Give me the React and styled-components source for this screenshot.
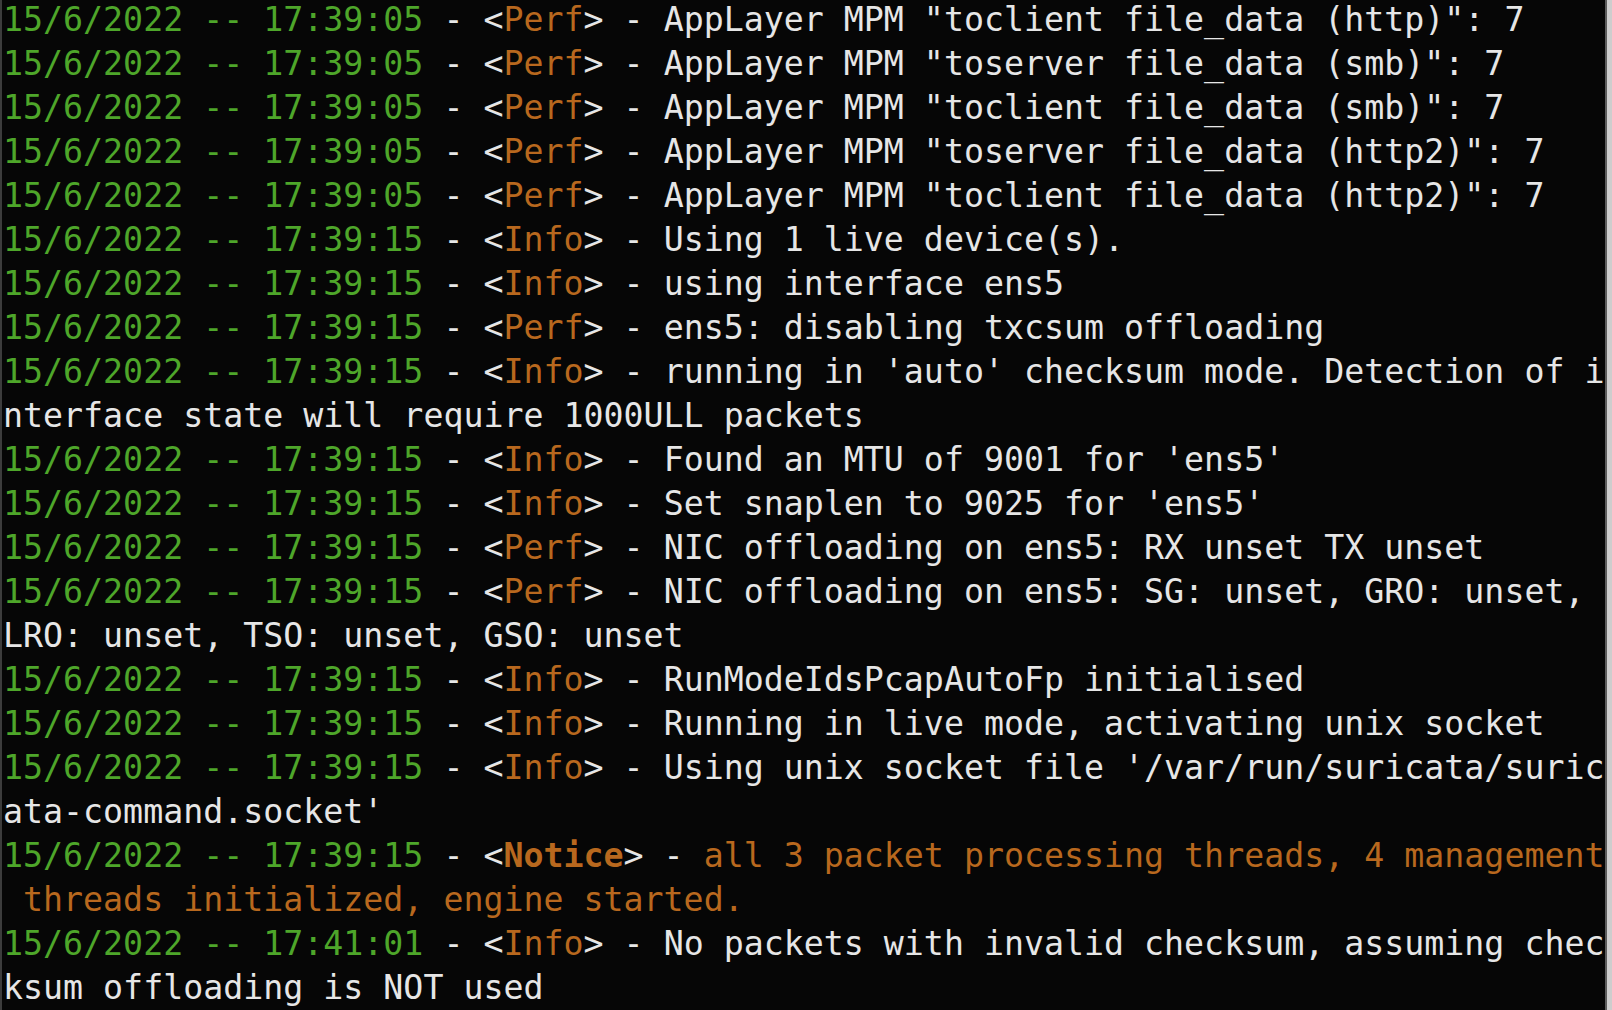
import React from 'react';
import styled, { createGlobalStyle } from 'styled-components';

const COLS = 80;
const GREEN = '#4ea62a';
const ORANGE = '#b8681e';
const WHITE = '#e6e6e6';

const GlobalStyle = createGlobalStyle`
  html, body {
    margin: 0;
    padding: 0;
    background: #060606;
    overflow: hidden;
  }
`;

const Window = styled.div`
  display: flex;
  width: 100vw;
  height: 100vh;
  background: #cdcdcd;
`;

const Terminal = styled.div`
  flex: 1;
  min-width: 0;
  background: #060606;
  border-left: 2px solid #3c3c3c;
  border-right: 2px solid #5c5c5c;
  padding-left: 1px;
  overflow: hidden;
  font-family: "DejaVu Sans Mono", "Liberation Mono", monospace;
  font-size: 33.25px;
  line-height: 44px;
  color: ${WHITE};
`;

const Scrollbar = styled.div`
  width: 5px;
  background: #cdcdcd;
`;

const Screen = styled.div`
  margin-top: -2px;
`;

const Row = styled.div`
  height: 44px;
  white-space: pre;
  overflow: hidden;
`;

const Cell = styled.span`
  color: ${p => p.$color};
  font-weight: ${p => (p.$bold ? 700 : 400)};
`;

const Cursor = styled.span`
  display: inline-block;
  width: 1ch;
  height: 42px;
  box-sizing: border-box;
  border: 1px solid ${WHITE};
  vertical-align: top;
`;

const log = [
  ['17:39:05', 'Perf', 'AppLayer MPM "toclient file_data (http)": 7'],
  ['17:39:05', 'Perf', 'AppLayer MPM "toserver file_data (smb)": 7'],
  ['17:39:05', 'Perf', 'AppLayer MPM "toclient file_data (smb)": 7'],
  ['17:39:05', 'Perf', 'AppLayer MPM "toserver file_data (http2)": 7'],
  ['17:39:05', 'Perf', 'AppLayer MPM "toclient file_data (http2)": 7'],
  ['17:39:15', 'Info', 'Using 1 live device(s).'],
  ['17:39:15', 'Info', 'using interface ens5'],
  ['17:39:15', 'Perf', 'ens5: disabling txcsum offloading'],
  ['17:39:15', 'Info', "running in 'auto' checksum mode. Detection of interface state will require 1000ULL packets"],
  ['17:39:15', 'Info', "Found an MTU of 9001 for 'ens5'"],
  ['17:39:15', 'Info', "Set snaplen to 9025 for 'ens5'"],
  ['17:39:15', 'Perf', 'NIC offloading on ens5: RX unset TX unset'],
  ['17:39:15', 'Perf', 'NIC offloading on ens5: SG: unset, GRO: unset, LRO: unset, TSO: unset, GSO: unset'],
  ['17:39:15', 'Info', 'RunModeIdsPcapAutoFp initialised'],
  ['17:39:15', 'Info', 'Running in live mode, activating unix socket'],
  ['17:39:15', 'Info', "Using unix socket file '/var/run/suricata/suricata-command.socket'"],
  ['17:39:15', 'Notice', 'all 3 packet processing threads, 4 management threads initialized, engine started.'],
  ['17:41:01', 'Info', 'No packets with invalid checksum, assuming checksum offloading is NOT used'],
];

function segmentsOf([time, level, msg]) {
  const notice = level === 'Notice';
  return [
    { text: `15/6/2022 -- ${time}`, color: GREEN },
    { text: ' - <', color: WHITE },
    { text: level, color: ORANGE, bold: notice },
    { text: '> - ', color: WHITE },
    { text: msg, color: notice ? ORANGE : WHITE },
  ];
}

// split a log line into terminal rows of COLS characters
function toRows(segments) {
  const rows = [[]];
  let used = 0;
  segments.forEach(seg => {
    let text = seg.text;
    while (text.length) {
      if (used === COLS) {
        rows.push([]);
        used = 0;
      }
      const take = text.slice(0, COLS - used);
      rows[rows.length - 1].push({ ...seg, text: take });
      used += take.length;
      text = text.slice(take.length);
    }
  });
  return rows;
}

const rows = log.flatMap(entry => toRows(segmentsOf(entry)));

export default function App() {
  return (
    <>
      <GlobalStyle />
      <Window>
        <Terminal>
          <Screen>
            {rows.map((row, i) => (
              <Row key={i}>
                {row.map((seg, j) => (
                  <Cell key={j} $color={seg.color} $bold={seg.bold}>
                    {seg.text}
                  </Cell>
                ))}
              </Row>
            ))}
            <Row>
              <Cursor />
            </Row>
          </Screen>
        </Terminal>
        <Scrollbar />
      </Window>
    </>
  );
}
